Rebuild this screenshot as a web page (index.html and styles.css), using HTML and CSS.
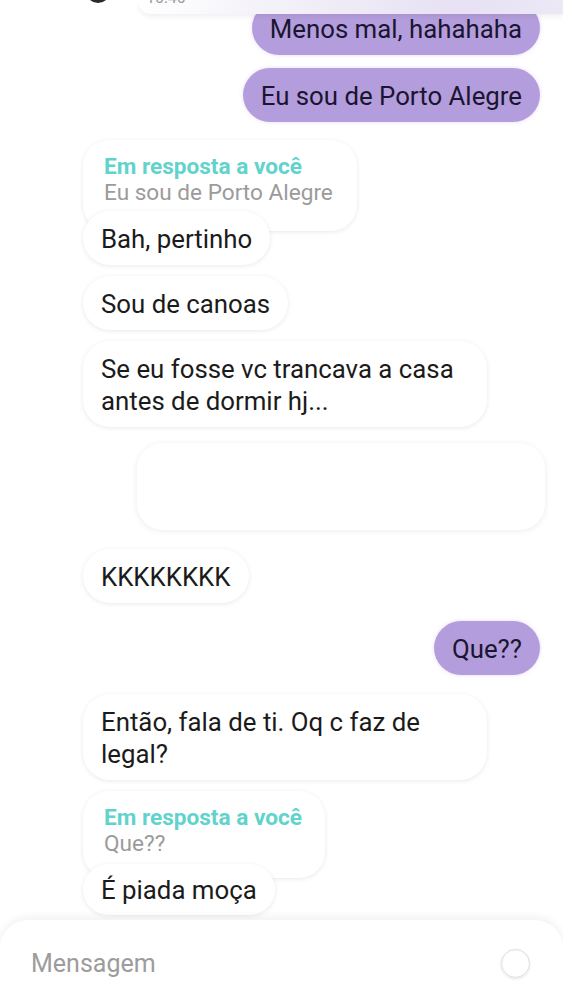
FILE: index.html
```html
<!DOCTYPE html>
<html lang="pt">
<head>
<meta charset="utf-8">
<link rel="stylesheet" href="styles.css">
</head>
<body>
<div class="topbar">
  <span class="avatar"></span>
  <div class="topcard"><span class="time">10:40</span></div>
</div>
<main class="chat">
  <div class="row out r1"><div class="bubble me">Menos mal, hahahaha</div></div>
  <div class="row out r2"><div class="bubble me">Eu sou de Porto Alegre</div></div>
  <div class="row in r3">
    <div class="reply">
      <div class="reply-title">Em resposta a você</div>
      <div class="reply-text">Eu sou de Porto Alegre</div>
    </div>
  </div>
  <div class="row in overlap"><div class="bubble them">Bah, pertinho</div></div>
  <div class="row in r4"><div class="bubble them">Sou de canoas</div></div>
  <div class="row in r5"><div class="bubble them wide">Se eu fosse vc trancava a casa antes de dormir hj...</div></div>
  <div class="row r6"><div class="blank"></div></div>
  <div class="row in r7"><div class="bubble them">KKKKKKKK</div></div>
  <div class="row out r8"><div class="bubble me">Que??</div></div>
  <div class="row in r9"><div class="bubble them wide">Então, fala de ti. Oq c faz de legal?</div></div>
  <div class="row in r10">
    <div class="reply reply2">
      <div class="reply-title">Em resposta a você</div>
      <div class="reply-text">Que??</div>
    </div>
  </div>
  <div class="row in overlap2"><div class="bubble them">É piada moça</div></div>
</main>
<footer class="composer">
  <span class="placeholder">Mensagem</span>
  <span class="circle"></span>
</footer>
</body>
</html>
```
FILE: styles.css
```css
* { box-sizing: border-box; }
html, body { margin: 0; padding: 0; }
body {
  width: 563px;
  height: 1000px;
  overflow: hidden;
  background: #ffffff;
  font-family: Roboto, "Noto Sans", sans-serif;
  color: #1b1b1b;
  position: relative;
}
.topbar {
  position: absolute;
  top: 0; left: 0; right: 0;
  height: 16px;
  z-index: 5;
}
.avatar {
  position: absolute;
  left: 86px; top: -20px;
  width: 24px; height: 23px;
  border-radius: 50%;
  background: #2a2a2a;
}
.topcard {
  position: absolute;
  left: 138px; right: 0; top: 0;
  height: 14px;
  border-bottom-left-radius: 14px;
  background: linear-gradient(90deg, #ffffff 0%, #f4f2f9 30%, #e7e1f3 75%, #ece8f6 100%);
  box-shadow: 0 3px 5px rgba(0,0,0,0.06);
  overflow: hidden;
}
.time {
  position: absolute;
  left: 8px; top: -10px;
  font-size: 16px;
  line-height: 16px;
  color: #9a9a9a;
}
.chat {
  display: flex;
  flex-direction: column;
  padding: 1px 23px 0 83px;
}
.row { display: flex; }
.row.out { justify-content: flex-end; }
.row.in { justify-content: flex-start; }
.bubble {
  font-size: 25.8px;
  line-height: 32px;
  padding: 12px 18px 10px;
  border-radius: 27px;
}
.me {
  background: #b49ddc;
  color: #1a1530;
  box-shadow: 0 0 4px rgba(180,157,220,0.35);
}
.them {
  background: #ffffff;
  box-shadow: 0 1px 5px rgba(0,0,0,0.09);
  padding-left: 18px;
}
.wide { width: 404px; padding-right: 20px; }
.r2 { margin-top: 13px; }
.r3 { margin-top: 18px; }
.reply {
  width: 274px;
  background: #ffffff;
  border-radius: 26px;
  padding: 14px 18px 25px 21px;
  box-shadow: 0 1px 5px rgba(0,0,0,0.09);
}
.reply-title {
  font-size: 22.6px;
  line-height: 26px;
  font-weight: 700;
  color: #62d3cc;
}
.reply-text {
  font-size: 22.6px;
  line-height: 26px;
  color: #9b9b9b;
}
.overlap { margin-top: -20px; }
.r4 { margin-top: 11px; }
.r5 { margin-top: 11px; }
.r6 { margin-top: 16px; padding-left: 54px; margin-right: -5px; }
.blank {
  width: 408px;
  height: 87px;
  background: #ffffff;
  border-radius: 26px;
  box-shadow: 0 1px 6px rgba(0,0,0,0.08);
}
.r7 { margin-top: 19px; }
.r8 { margin-top: 18px; }
.r9 { margin-top: 19px; }
.r10 { margin-top: 11px; }
.reply2 { width: 242px; padding-bottom: 21px; }
.overlap2 { margin-top: -14px; }
.overlap2 .bubble { padding-top: 10px; padding-bottom: 9px; }
.composer {
  position: absolute;
  left: 0; right: 0; top: 920px; bottom: 0;
  background: #ffffff;
  border-radius: 28px 28px 0 0;
  box-shadow: 0 -3px 8px rgba(0,0,0,0.06);
  display: flex;
  align-items: center;
  justify-content: space-between;
  padding: 6px 33px 0 31px;
}
.placeholder {
  font-size: 25px;
  color: #9c9c9c;
}
.circle {
  width: 29px; height: 29px;
  border-radius: 50%;
  border: 1.5px solid #dedede;
  background: radial-gradient(circle, #ffffff 60%, #f1f1f1 100%);
  box-shadow: 0 1px 3px rgba(0,0,0,0.1);
}
```
